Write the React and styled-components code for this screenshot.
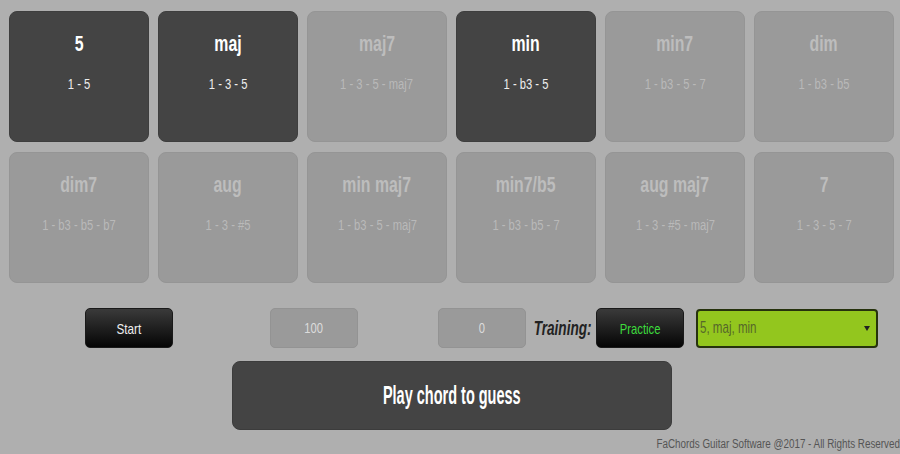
import React from "react";
import styled, { createGlobalStyle } from "styled-components";

const GlobalStyle = createGlobalStyle`
  html, body {
    margin: 0;
    padding: 0;
    background: #afafaf;
  }
  body {
    font-family: "Liberation Sans", Arial, sans-serif;
  }
`;

const chords = [
  { name: "5", formula: "1 - 5", active: true },
  { name: "maj", formula: "1 - 3 - 5", active: true },
  { name: "maj7", formula: "1 - 3 - 5 - maj7" },
  { name: "min", formula: "1 - b3 - 5", active: true },
  { name: "min7", formula: "1 - b3 - 5 - 7" },
  { name: "dim", formula: "1 - b3 - b5" },
  { name: "dim7", formula: "1 - b3 - b5 - b7" },
  { name: "aug", formula: "1 - 3 - #5" },
  { name: "min maj7", formula: "1 - b3 - 5 - maj7" },
  { name: "min7/b5", formula: "1 - b3 - b5 - 7" },
  { name: "aug maj7", formula: "1 - 3 - #5 - maj7" },
  { name: "7", formula: "1 - 3 - 5 - 7" },
];

/* condensed lettering: squeeze the glyphs horizontally */
const Narrow = styled.span`
  display: inline-block;
  white-space: nowrap;
  transform: scaleX(${(p) => p.$sx || 0.75});
  transform-origin: ${(p) => p.$origin || "center"};
`;

const Page = styled.div`
  width: 900px;
  height: 454px;
  box-sizing: border-box;
  padding: 11px 6px 0 9px;
  overflow: hidden;
`;

const ChordGrid = styled.div`
  display: grid;
  grid-template-columns: repeat(6, 140px);
  grid-auto-rows: 131px;
  column-gap: 9px;
  row-gap: 10px;
`;

const ChordCard = styled.div`
  box-sizing: border-box;
  border-radius: 8px;
  background: ${(p) => (p.$active ? "#444444" : "#9a9a9a")};
  border: 1px solid ${(p) => (p.$active ? "#3e3e3e" : "#959595")};
  color: ${(p) => (p.$active ? "#ffffff" : "#bdbdbd")};
  display: flex;
  flex-direction: column;
  align-items: center;
  padding-top: 19px;
`;

const ChordName = styled.div`
  font-size: 22px;
  font-weight: bold;
  line-height: 25px;
`;

const Formula = styled.div`
  margin-top: 20px;
  font-size: 14px;
  line-height: 16px;
  color: ${(p) => (p.$active ? "#eeeeee" : "#b9b9b9")};
`;

const Controls = styled.div`
  display: flex;
  align-items: center;
  height: 40px;
  margin-top: 25px;
  padding-left: 76px;
`;

const DarkButton = styled.div`
  box-sizing: border-box;
  flex: none;
  width: 88px;
  height: 40px;
  margin-left: ${(p) => p.$gap || 0}px;
  border-radius: 5px;
  background: linear-gradient(#3a3a3a, #050505);
  border: 1px solid #1a1a1a;
  color: ${(p) => p.$color || "#eeeeee"};
  font-size: 15px;
  display: flex;
  align-items: center;
  justify-content: center;
`;

const NumberBox = styled.div`
  box-sizing: border-box;
  flex: none;
  width: 88px;
  height: 40px;
  margin-left: ${(p) => p.$gap || 0}px;
  border-radius: 5px;
  background: #9a9a9a;
  border: 1px solid #939393;
  color: #dcdcdc;
  font-size: 14px;
  display: flex;
  align-items: center;
  justify-content: center;
`;

const Label = styled.div`
  flex: none;
  width: 55px;
  margin-left: 9px;
  margin-right: 6px;
  display: flex;
  justify-content: center;
  font-size: 20px;
  font-weight: bold;
  font-style: italic;
  color: #222222;
`;

const Select = styled.div`
  box-sizing: border-box;
  flex: none;
  width: 182px;
  height: 39px;
  margin-left: 12px;
  border-radius: 4px;
  background: #93c61e;
  border: 2px solid #26320d;
  color: #56672a;
  font-size: 17px;
  display: flex;
  align-items: center;
  justify-content: space-between;
  padding: 0 6px 0 2px;
`;

const Caret = styled.span`
  width: 0;
  height: 0;
  border-left: 3px solid transparent;
  border-right: 3px solid transparent;
  border-top: 5px solid #222;
`;

const PlayButton = styled.div`
  box-sizing: border-box;
  width: 440px;
  height: 69px;
  margin: 13px auto 0;
  border-radius: 8px;
  background: #444444;
  border: 1px solid #3c3c3c;
  color: #ffffff;
  font-size: 25px;
  font-weight: bold;
  display: flex;
  align-items: center;
  justify-content: center;
`;

const Footer = styled.div`
  margin-top: 6px;
  margin-right: -6px;
  display: flex;
  justify-content: flex-end;
  font-size: 12px;
  color: #555555;
  line-height: 16px;
`;

export default function App() {
  return (
    <>
      <GlobalStyle />
      <Page>
        <ChordGrid>
          {chords.map((c) => (
            <ChordCard key={c.name} $active={c.active}>
              <ChordName>
                <Narrow $sx={0.72}>{c.name}</Narrow>
              </ChordName>
              <Formula $active={c.active}>
                <Narrow $sx={0.8}>{c.formula}</Narrow>
              </Formula>
            </ChordCard>
          ))}
        </ChordGrid>
        <Controls>
          <DarkButton>
            <Narrow $sx={0.78}>Start</Narrow>
          </DarkButton>
          <NumberBox $gap={97}>
            <Narrow $sx={0.8}>100</Narrow>
          </NumberBox>
          <NumberBox $gap={80}>
            <Narrow $sx={0.8}>0</Narrow>
          </NumberBox>
          <Label>
            <Narrow $sx={0.68}>Training:</Narrow>
          </Label>
          <DarkButton $color="#3ddc3d">
            <Narrow $sx={0.75}>Practice</Narrow>
          </DarkButton>
          <Select>
            <Narrow $sx={0.68} $origin="left">5, maj, min</Narrow>
            <Caret />
          </Select>
        </Controls>
        <PlayButton>
          <Narrow $sx={0.58}>Play chord to guess</Narrow>
        </PlayButton>
        <Footer>
          <Narrow $sx={0.82} $origin="right">
            FaChords Guitar Software @2017 - All Rights Reserved
          </Narrow>
        </Footer>
      </Page>
    </>
  );
}
